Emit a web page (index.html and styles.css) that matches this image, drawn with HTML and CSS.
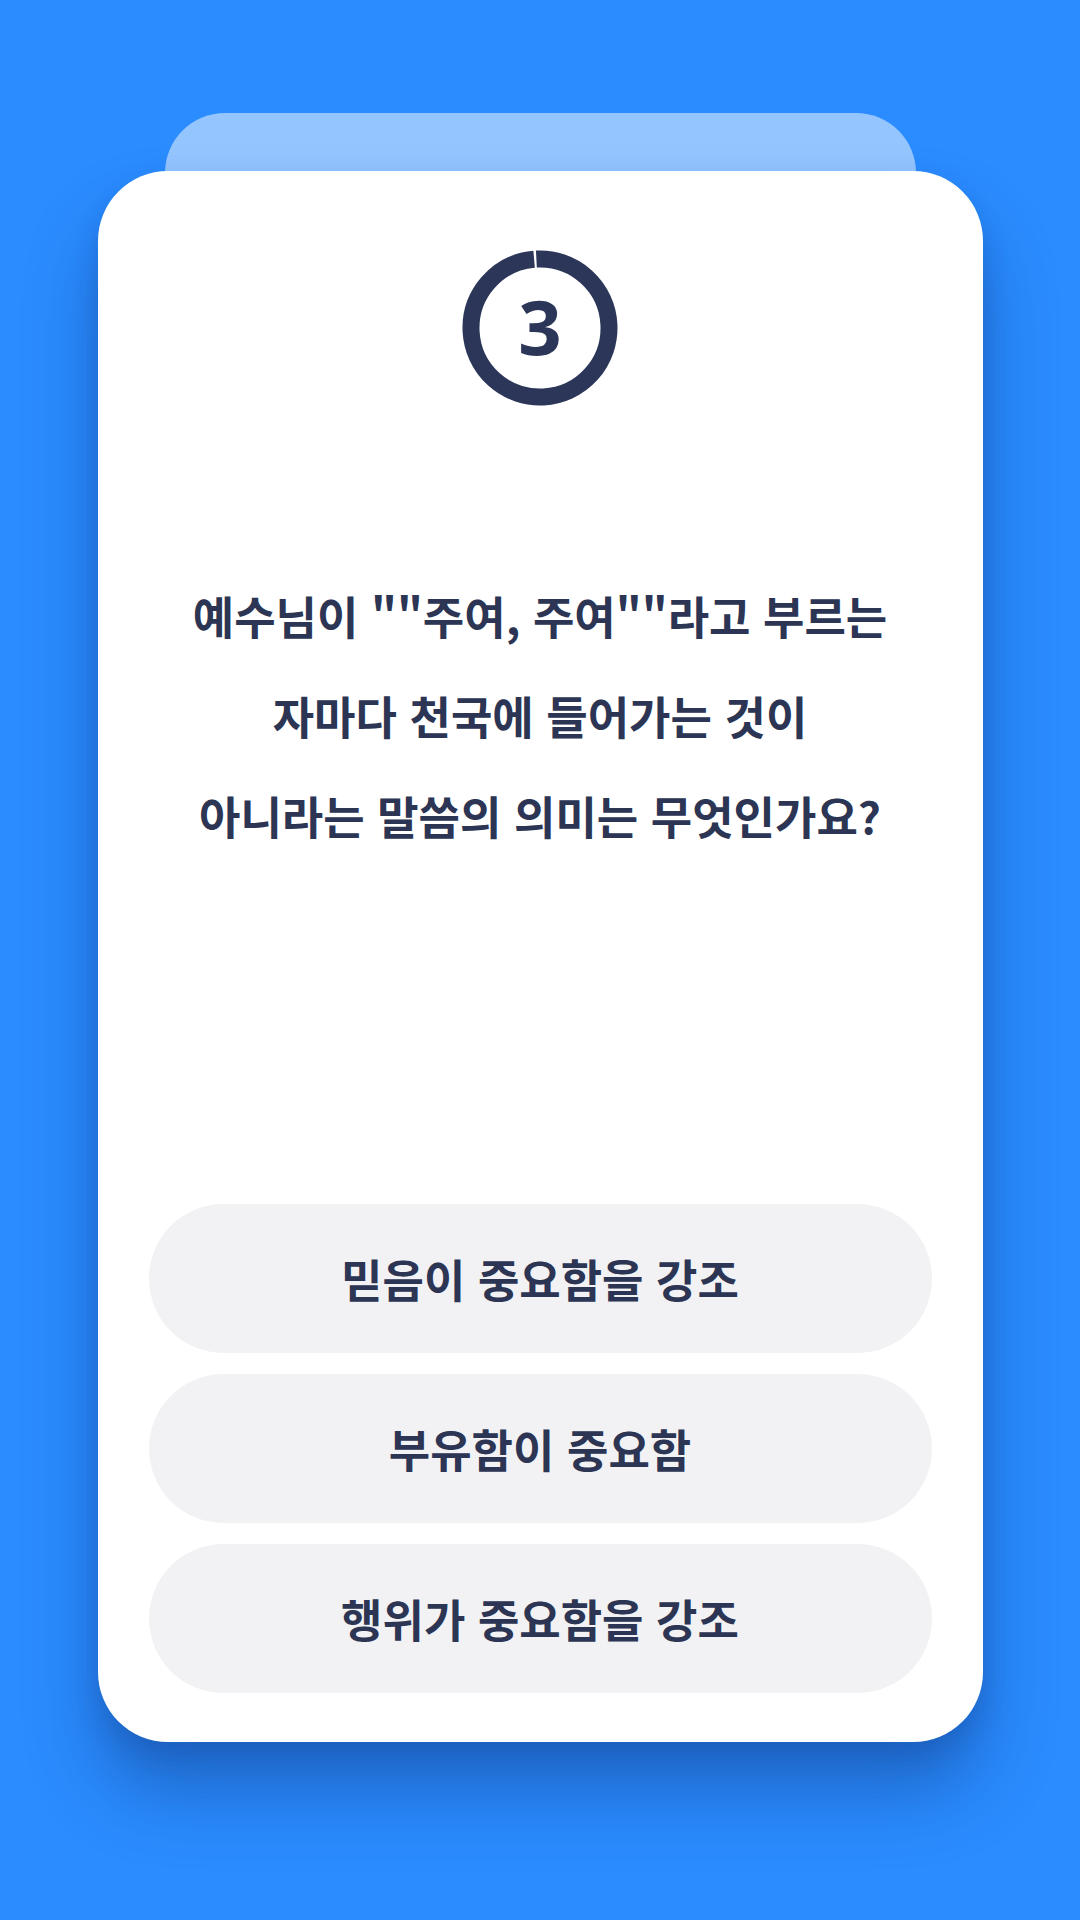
FILE: index.html
```html
<!DOCTYPE html>
<html lang="ko">
<head>
<meta charset="utf-8">
<link rel="stylesheet" href="styles.css">
</head>
<body>
<div class="stage">
  <div class="back-tab"></div>
  <div class="card">
    <div class="timer">
      <svg class="ring" viewBox="0 0 156 156" width="156" height="156">
        <circle cx="78" cy="78" r="69" fill="none" stroke="#2b3658" stroke-width="17" stroke-dasharray="430.5 3" transform="rotate(-93 78 78)"/>
      </svg>
      <span class="num">3</span>
    </div>
    <p class="question">예수님이 ""주여, 주여""라고 부르는<br>자마다 천국에 들어가는 것이<br>아니라는 말씀의 의미는 무엇인가요?</p>
    <div class="answers">
      <div class="answer">믿음이 중요함을 강조</div>
      <div class="answer">부유함이 중요함</div>
      <div class="answer">행위가 중요함을 강조</div>
    </div>
  </div>
</div>
</body>
</html>
```

FILE: styles.css
```css
html, body {
  margin: 0;
  padding: 0;
}
body {
  width: 1080px;
  height: 1920px;
  background: #2a8cff;
  font-family: "Noto Sans CJK KR", "Noto Sans", sans-serif;
  overflow: hidden;
}
.stage {
  display: flex;
  flex-direction: column;
  align-items: center;
  padding-top: 113px;
}
.back-tab {
  width: 751px;
  height: 120px;
  background: #94c5ff;
  border-radius: 60px 60px 0 0;
}
.card {
  position: relative;
  margin-top: -62px;
  width: 885px;
  height: 1571px;
  box-sizing: border-box;
  background: #ffffff;
  border-radius: 70px;
  box-shadow: 0 50px 70px rgba(15, 50, 120, 0.4), 0 12px 24px rgba(15, 50, 120, 0.18);
  padding: 79px 51px 49px;
  display: flex;
  flex-direction: column;
  align-items: center;
}
.timer {
  position: relative;
  width: 156px;
  height: 156px;
  display: flex;
  align-items: center;
  justify-content: center;
}
.ring {
  position: absolute;
  left: 0;
  top: 0;
}
.num {
  font-family: "Noto Sans", "Noto Sans CJK KR", sans-serif;
  font-weight: 700;
  font-size: 76px;
  line-height: 1;
  color: #2b3658;
  margin-top: -4px;
}
.question {
  margin: 160px 0 0;
  text-align: center;
  font-weight: 700;
  font-size: 45px;
  line-height: 100px;
  color: #2c3553;
}
.answers {
  margin-top: auto;
  width: 100%;
  display: flex;
  flex-direction: column;
  gap: 21px;
}
.answer {
  height: 149px;
  border-radius: 75px;
  background: #f2f2f5;
  display: flex;
  align-items: center;
  justify-content: center;
  font-weight: 700;
  font-size: 45px;
  color: #2c3553;
}
```
